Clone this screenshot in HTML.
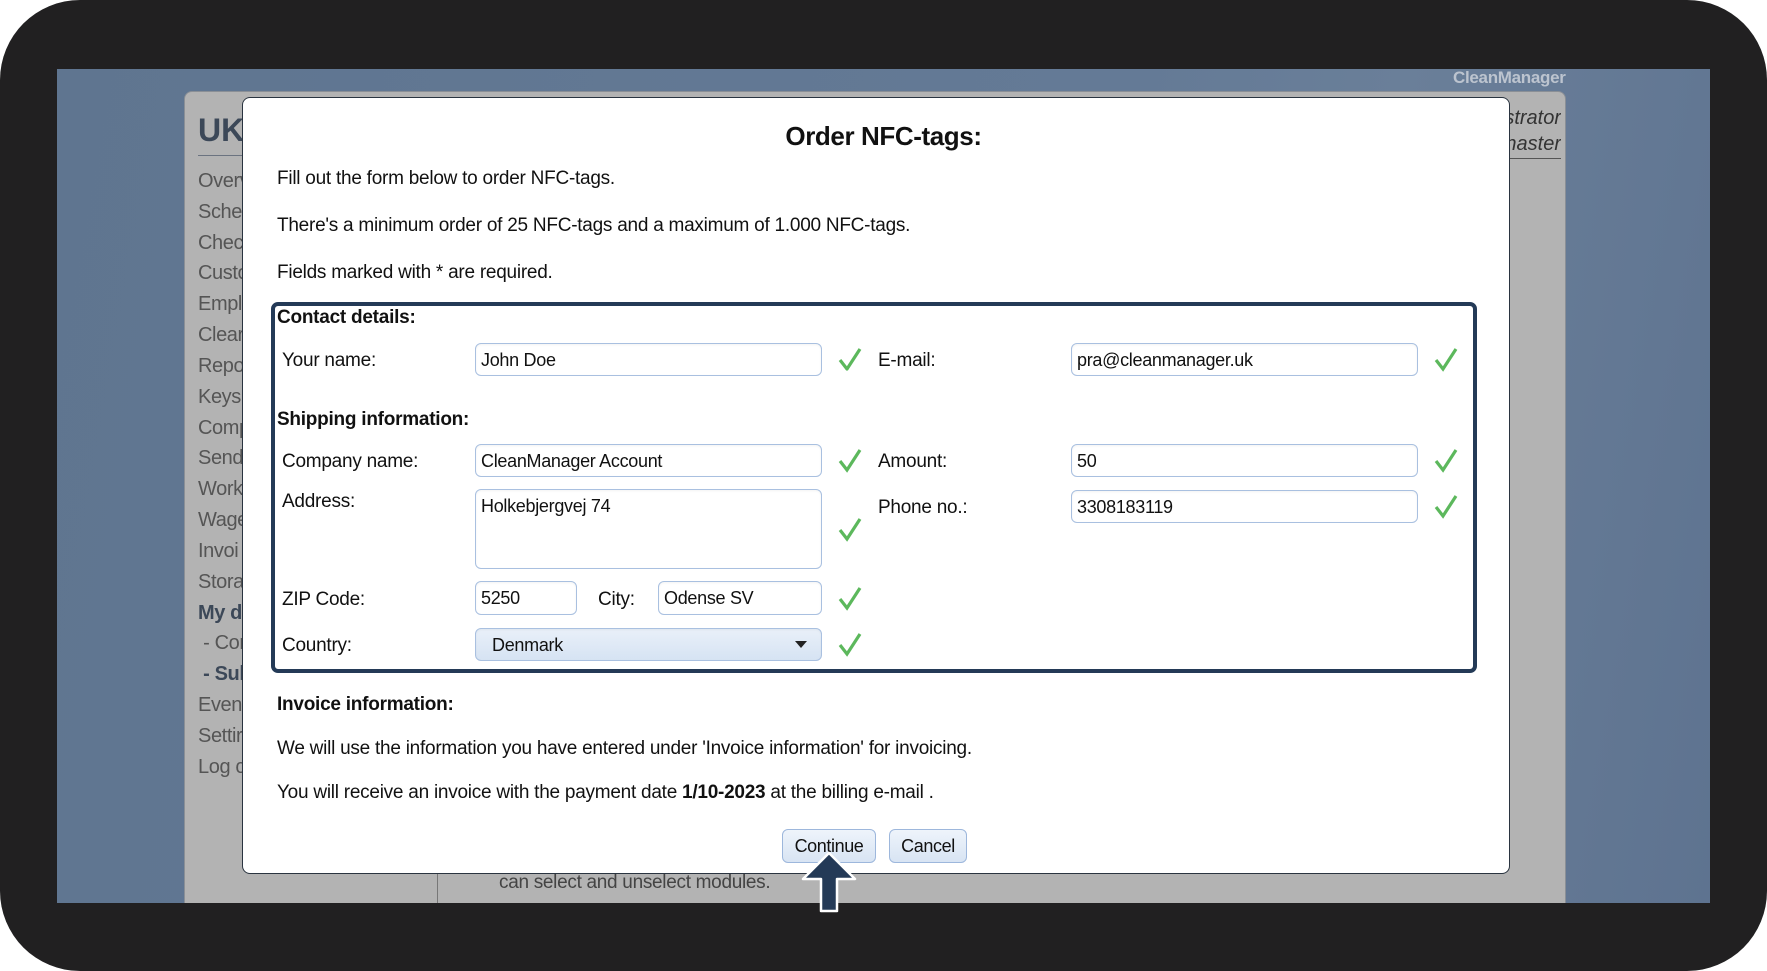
<!DOCTYPE html>
<html><head><meta charset="utf-8"><style>
*{margin:0;padding:0;box-sizing:border-box}
body{width:1767px;height:971px;background:#fff;overflow:hidden;font-family:"Liberation Sans",Arial,sans-serif;position:relative}
.abs{position:absolute}
#frame{left:0;top:0;width:1767px;height:971px;background:#212021;border-radius:80px}
#screen{left:57px;top:69px;width:1653px;height:834px;background:linear-gradient(100deg,#5f7590 0%,#647a96 60%,#6a7f99 75%,#5e7390 100%)}
#panel{left:184px;top:91px;width:1382px;height:812px;background:#b3b3b3;border-radius:8px 8px 0 0;border:1px solid #8a8f96;border-bottom:none}
.menu{left:198px;font-size:20px;color:#555;line-height:20px;letter-spacing:-0.4px}
#modal{left:242px;top:97px;width:1268px;height:777px;background:#fff;border:1.5px solid #2a3440;border-radius:8px}
.t{position:absolute;font-size:19px;color:#111;white-space:nowrap;line-height:20px;letter-spacing:-0.25px}
.b{font-weight:bold}
.inp{position:absolute;border:1px solid #a9c0e0;border-radius:6px;background:#fff;font-size:18px;color:#111;padding:6px 5px;line-height:20px;letter-spacing:-0.3px;box-shadow:inset 0 1px 2px rgba(0,0,0,.05)}
.chk{position:absolute;width:24px;height:26px}
.btn{position:absolute;border:1px solid #9db7dc;border-radius:6px;background:linear-gradient(#eef4fb,#d8e4f3);font-size:18px;color:#111;text-align:center;line-height:32px;letter-spacing:-0.4px}
</style></head><body>
<div id="frame" class="abs"></div>
<div id="screen" class="abs"></div>
<div class="abs" style="left:1453px;top:68px;font-size:17px;font-weight:bold;color:#bcc4cf;letter-spacing:-0.3px">CleanManager</div>
<div id="panel" class="abs"></div>
<div class="abs" style="left:198px;top:112px;font-size:32px;font-weight:bold;color:#3c4858">UK-</div>
<div class="abs" style="left:198px;top:155px;width:60px;height:1px;background:#6b7380"></div>
<div class="abs menu" style="top:171px">Overv</div>
<div class="abs menu" style="top:202px">Sche</div>
<div class="abs menu" style="top:233px">Chec</div>
<div class="abs menu" style="top:263px">Custo</div>
<div class="abs menu" style="top:294px">Empl</div>
<div class="abs menu" style="top:325px">Clear</div>
<div class="abs menu" style="top:356px">Repo</div>
<div class="abs menu" style="top:387px">Keys</div>
<div class="abs menu" style="top:418px">Comp</div>
<div class="abs menu" style="top:448px">Send</div>
<div class="abs menu" style="top:479px">Work</div>
<div class="abs menu" style="top:510px">Wage</div>
<div class="abs menu" style="top:541px">Invoi</div>
<div class="abs menu" style="top:572px">Stora</div>
<div class="abs menu" style="top:603px;font-weight:bold;color:#3c4858">My d</div>
<div class="abs menu" style="top:633px">&nbsp;- Cor</div>
<div class="abs menu" style="top:664px;font-weight:bold;color:#3c4858">&nbsp;- Sul</div>
<div class="abs menu" style="top:695px">Even</div>
<div class="abs menu" style="top:726px">Settir</div>
<div class="abs menu" style="top:757px">Log c</div>
<div class="abs" style="left:1500px;top:107px;font-size:20px;font-style:italic;color:#333;width:61px;text-align:right;overflow:hidden;direction:rtl">strator</div>
<div class="abs" style="left:1500px;top:133px;font-size:20px;font-style:italic;color:#333;width:61px;text-align:right;overflow:hidden;direction:rtl;border-bottom:1px solid #555;padding-bottom:2px">naster</div>
<div class="abs" style="left:437px;top:872px;width:1px;height:31px;background:#777"></div>
<div class="abs" style="left:499px;top:872px;font-size:19px;color:#444;letter-spacing:-0.3px">can select and unselect modules.</div>

<div id="modal" class="abs"></div>
<div class="t b" style="left:0;width:1767px;text-align:center;top:121px;font-size:26px;line-height:30px;color:#111;letter-spacing:-0.4px">Order NFC-tags:</div>
<div class="t" style="left:277px;top:169px">Fill out the form below to order NFC-tags.</div>
<div class="t" style="left:277px;top:216px">There's a minimum order of 25 NFC-tags and a maximum of 1.000 NFC-tags.</div>
<div class="t" style="left:277px;top:263px">Fields marked with * are required.</div>

<div class="abs" style="left:271px;top:302px;width:1206px;height:371px;border:4px solid #243a57;border-radius:7px"></div>
<div class="t b" style="left:277px;top:308px">Contact details:</div>
<div class="t" style="left:282px;top:351px">Your name:</div>
<div class="inp" style="left:475px;top:343px;width:347px;height:33px">John Doe</div>
<div class="t" style="left:878px;top:351px">E-mail:</div>
<div class="inp" style="left:1071px;top:343px;width:347px;height:33px">pra@cleanmanager.uk</div>
<div class="t b" style="left:277px;top:410px">Shipping information:</div>
<div class="t" style="left:282px;top:452px">Company name:</div>
<div class="inp" style="left:475px;top:444px;width:347px;height:33px">CleanManager Account</div>
<div class="t" style="left:878px;top:452px">Amount:</div>
<div class="inp" style="left:1071px;top:444px;width:347px;height:33px">50</div>
<div class="t" style="left:282px;top:492px">Address:</div>
<div class="inp" style="left:475px;top:489px;width:347px;height:80px">Holkebjergvej 74</div>
<div class="t" style="left:878px;top:498px">Phone no.:</div>
<div class="inp" style="left:1071px;top:490px;width:347px;height:33px">3308183119</div>
<div class="t" style="left:282px;top:590px">ZIP Code:</div>
<div class="inp" style="left:475px;top:581px;width:102px;height:34px">5250</div>
<div class="t" style="left:598px;top:590px">City:</div>
<div class="inp" style="left:658px;top:581px;width:164px;height:34px">Odense SV</div>
<div class="t" style="left:282px;top:636px">Country:</div>
<div class="inp" style="left:475px;top:628px;width:347px;height:33px;background:linear-gradient(#e9f0f9,#d6e3f3);padding-left:16px">Denmark</div>
<div class="abs" style="left:795px;top:641px;width:0;height:0;border-left:6px solid transparent;border-right:6px solid transparent;border-top:7px solid #222"></div>

<svg class="chk" style="left:838px;top:346px" viewBox="0 0 24 26"><path d="M2 14 L9 23 L22 3" fill="none" stroke="#5cb85c" stroke-width="3.2" stroke-linejoin="round"/></svg>
<svg class="chk" style="left:1434px;top:346px" viewBox="0 0 24 26"><path d="M2 14 L9 23 L22 3" fill="none" stroke="#5cb85c" stroke-width="3.2"/></svg>
<svg class="chk" style="left:838px;top:447px" viewBox="0 0 24 26"><path d="M2 14 L9 23 L22 3" fill="none" stroke="#5cb85c" stroke-width="3.2"/></svg>
<svg class="chk" style="left:1434px;top:447px" viewBox="0 0 24 26"><path d="M2 14 L9 23 L22 3" fill="none" stroke="#5cb85c" stroke-width="3.2"/></svg>
<svg class="chk" style="left:838px;top:516px" viewBox="0 0 24 26"><path d="M2 14 L9 23 L22 3" fill="none" stroke="#5cb85c" stroke-width="3.2"/></svg>
<svg class="chk" style="left:1434px;top:493px" viewBox="0 0 24 26"><path d="M2 14 L9 23 L22 3" fill="none" stroke="#5cb85c" stroke-width="3.2"/></svg>
<svg class="chk" style="left:838px;top:585px" viewBox="0 0 24 26"><path d="M2 14 L9 23 L22 3" fill="none" stroke="#5cb85c" stroke-width="3.2"/></svg>
<svg class="chk" style="left:838px;top:631px" viewBox="0 0 24 26"><path d="M2 14 L9 23 L22 3" fill="none" stroke="#5cb85c" stroke-width="3.2"/></svg>

<div class="t b" style="left:277px;top:695px">Invoice information:</div>
<div class="t" style="left:277px;top:739px">We will use the information you have entered under 'Invoice information' for invoicing.</div>
<div class="t" style="left:277px;top:783px">You will receive an invoice with the payment date <b>1/10-2023</b> at the billing e-mail .</div>
<div class="btn" style="left:782px;top:829px;width:94px;height:34px">Continue</div>
<div class="btn" style="left:889px;top:829px;width:78px;height:34px">Cancel</div>
<svg class="abs" style="left:800px;top:850px" width="60" height="64" viewBox="0 0 60 64"><path d="M29 3 L55 29 L37 29 L37 61 L21 61 L21 29 L3 29 Z" fill="#243a57" stroke="#fff" stroke-width="2.5" stroke-linejoin="round"/></svg>
</body></html>
